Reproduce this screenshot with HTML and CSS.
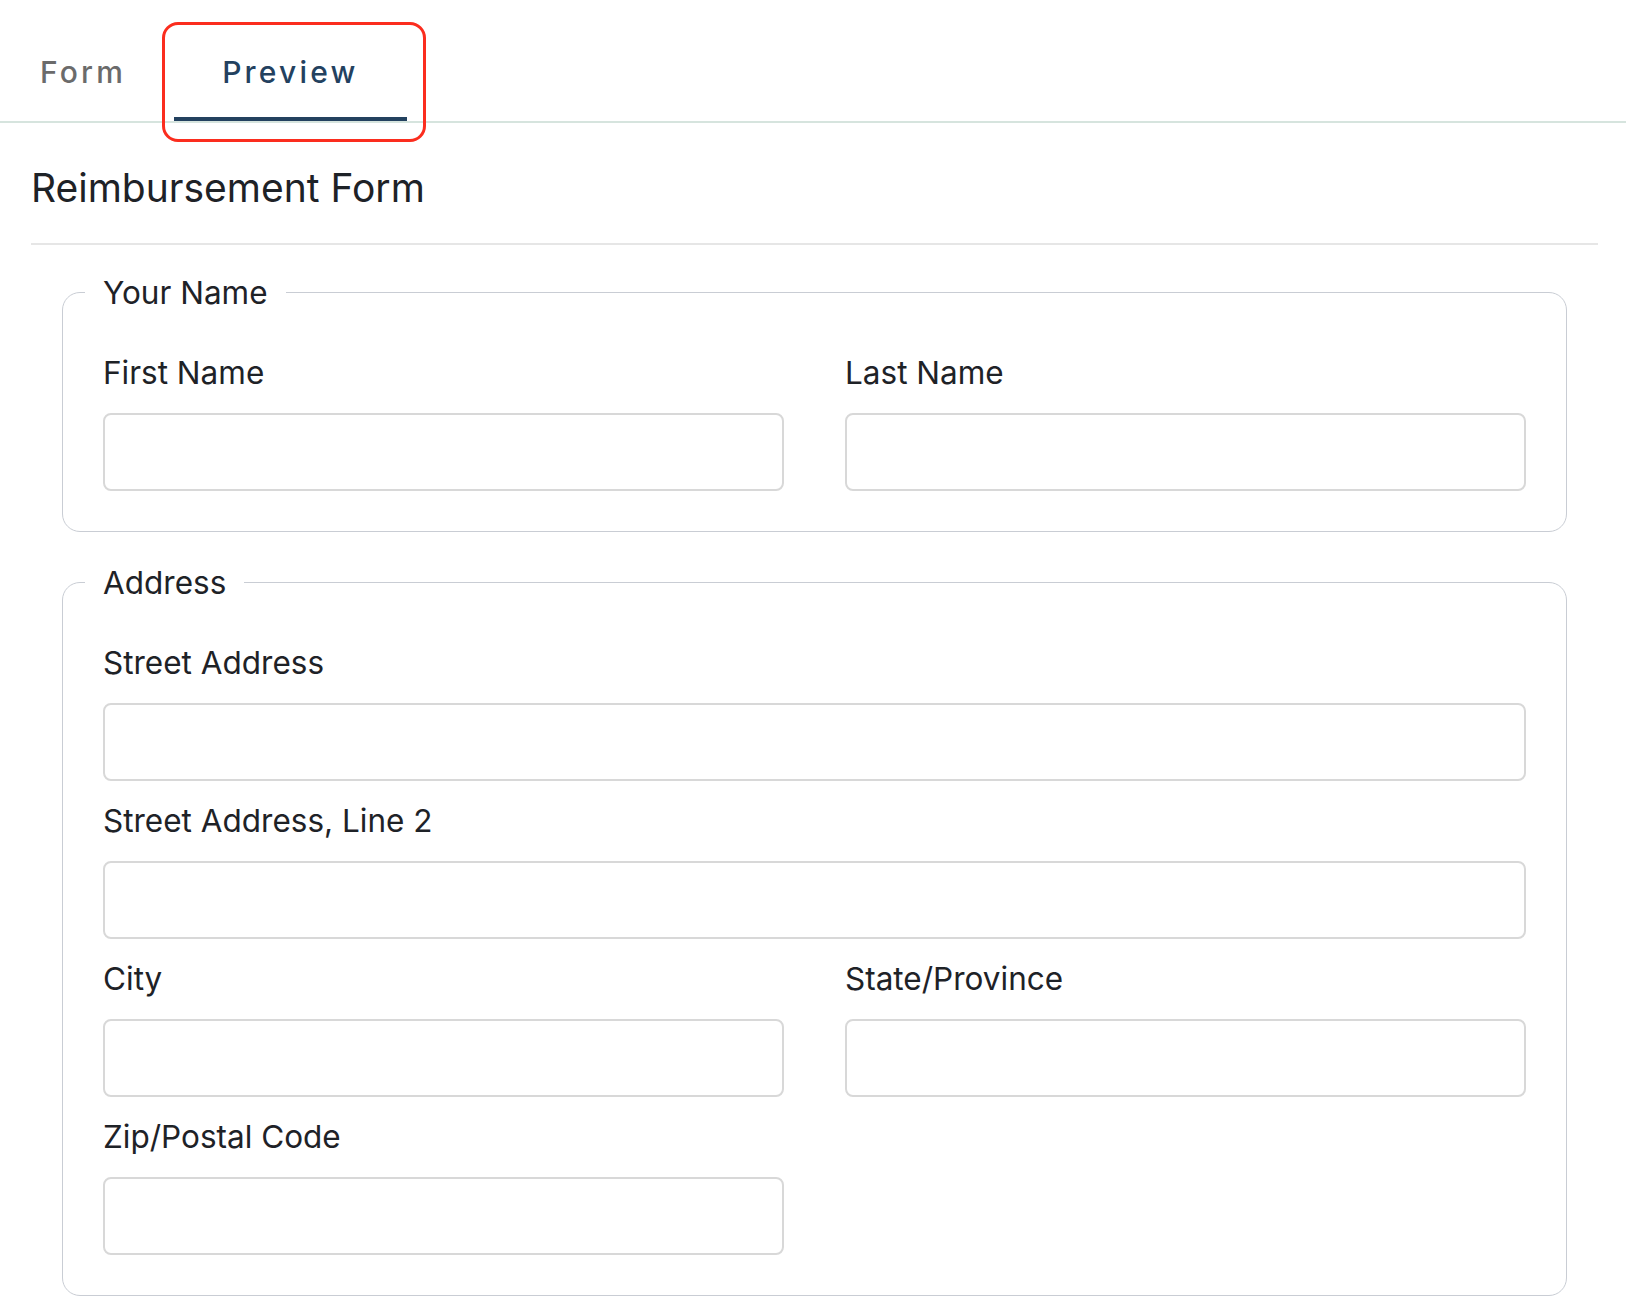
FILE: index.html
```html
<!DOCTYPE html>
<html lang="en">

<head>
    <meta charset="UTF-8">
    <title>Reimbursement Form</title>
    <link rel="stylesheet" href="styles.css">
</head>

<body>
    <div class="tabs">
        <div class="tab">Form</div>
        <div class="tab active">Preview</div>
        <div class="highlight"></div>
    </div>

    <h1 class="title">Reimbursement Form</h1>
    <hr class="divider">

    <form class="form">
        <fieldset class="group">
            <legend>Your Name</legend>
            <div class="row two">
                <div class="field">
                    <label for="first">First Name</label>
                    <input type="text" id="first">
                </div>
                <div class="field">
                    <label for="last">Last Name</label>
                    <input type="text" id="last">
                </div>
            </div>
        </fieldset>

        <fieldset class="group">
            <legend>Address</legend>
            <div class="row">
                <div class="field">
                    <label for="street">Street Address</label>
                    <input type="text" id="street">
                </div>
            </div>
            <div class="row">
                <div class="field">
                    <label for="street2">Street Address, Line 2</label>
                    <input type="text" id="street2">
                </div>
            </div>
            <div class="row two">
                <div class="field">
                    <label for="city">City</label>
                    <input type="text" id="city">
                </div>
                <div class="field">
                    <label for="state">State/Province</label>
                    <input type="text" id="state">
                </div>
            </div>
            <div class="row two">
                <div class="field">
                    <label for="zip">Zip/Postal Code</label>
                    <input type="text" id="zip">
                </div>
            </div>
        </fieldset>
    </form>
</body>

</html>
```

FILE: styles.css
```css
body {
    font-family: Inter, 'Liberation Sans', Arial, sans-serif;
    color: #1e2227;
    background: #fff;
    margin: 0;
    padding: 0 28px 40px 31px;
}

.tabs {
    position: relative;
    display: flex;
    margin: 0 -28px 0 -39px;
    border-bottom: 2px solid #d6e4de;
}

.tab {
    padding: 50px 48px 22px 48px;
    font-size: 30px;
    line-height: 45px;
    font-weight: 500;
    letter-spacing: 3.2px;
    color: #6b6b6b;
    border-bottom: 4px solid transparent;
}

.tab.active {
    color: #23415f;
    border-bottom-color: #23415f;
}

.highlight {
    position: absolute;
    left: 170px;
    top: 22px;
    width: 258px;
    height: 114px;
    border: 3px solid #fb2d1e;
    border-radius: 16px;
}

.title {
    font-size: 39px;
    font-weight: 400;
    line-height: 44px;
    margin: 43px 0 0 0;
}

.divider {
    border: none;
    border-top: 2px solid #e6e6e6;
    margin: 33px 0 0 0;
}

.group {
    margin: 25px 31px 0 31px;
    padding: 35px 40px 40px 40px;
    border: 1px solid #c9cdd4;
    border-radius: 18px;
    display: flex;
    flex-direction: column;
    gap: 17px;
}

.group + .group {
    margin-top: 28px;
}

legend {
    font-size: 31.5px;
    line-height: 45px;
    padding: 0 18px;
    margin-left: -18px;
}

.row {
    display: grid;
    grid-template-columns: 1fr;
}

.row.two {
    grid-template-columns: 1fr 1fr;
    column-gap: 61px;
}

.field {
    display: flex;
    flex-direction: column;
}

label {
    font-size: 31.5px;
    line-height: 45px;
    margin-bottom: 18px;
}

input[type="text"] {
    box-sizing: border-box;
    height: 78px;
    border: 2px solid #d8d8d8;
    border-radius: 8px;
    background: #fff;
    font: inherit;
    font-size: 30px;
    padding: 0 16px;
}
```
